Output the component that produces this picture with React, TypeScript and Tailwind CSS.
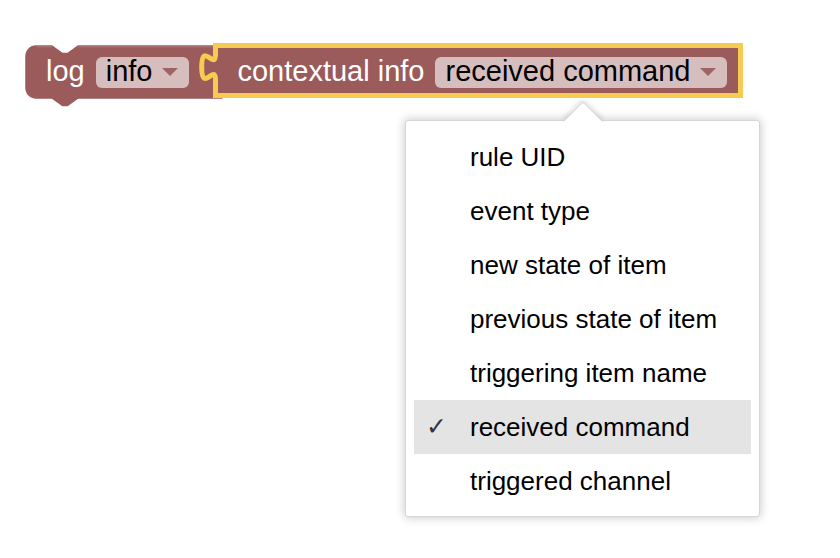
import React from "react";

const BLOCK = "#9b5b5b";

function Field({ label }: { label: string }) {
  return (
    <span className="flex items-center h-[31px] rounded-[6px] bg-[#d7bebe] pl-[10px] pr-[11px] gap-[10px] text-black">
      <span>{label}</span>
      <svg width="16" height="8" viewBox="0 0 16 8">
        <polygon points="0,0 16,0 8,8" fill="#a06262" />
      </svg>
    </span>
  );
}

function BlockShapes() {
  return (
    <svg className="absolute left-0 top-0" width="840" height="558">
      <path
        d="M26 56 A10 10 0 0 1 36 46 H52 L62.4 53.5 H67.6 L78 46 H222 V98 H78 L67.6 105.5 H62.4 L52 98 H36 A10 10 0 0 1 26 88 Z"
        fill={BLOCK}
        stroke={BLOCK}
        strokeWidth="1.5"
        strokeLinejoin="round"
      />
      <path d="M36 46.8 H52 M78 46.8 H213" stroke="#b07a7a" strokeWidth="1" fill="none" />
      <path
        d="M215.5 45.5 H740.5 V95.5 H215.5 V80.1 C215.5 62.8 201.7 93.9 201.7 67.1 C201.7 40.3 215.5 71.5 215.5 54.2 Z"
        fill={BLOCK}
        stroke="#f6cb52"
        strokeWidth="5"
      />
    </svg>
  );
}

export default function App() {
  const items = [
    "rule UID",
    "event type",
    "new state of item",
    "previous state of item",
    "triggering item name",
    "received command",
    "triggered channel",
  ];
  const sel = "received command";
  return (
    <div className="relative w-[840px] h-[558px] bg-white overflow-hidden font-['Liberation_Sans',Arial,sans-serif]">
      <BlockShapes />

      <div className="absolute left-[26px] top-[46px] h-[52px] flex items-center text-[29px] text-white">
        <div className="flex items-center pl-[20px] gap-[11px]">
          <span>log</span>
          <Field label="info" />
        </div>
        <div className="flex items-center ml-[48px] gap-[11px]">
          <span>contextual info</span>
          <Field label="received command" />
        </div>
      </div>

      <div className="absolute left-[405px] top-[120px] w-[355px] h-[397px] bg-white border border-[#d6d6d6] rounded-[3px] shadow-[0_0_10px_1px_rgba(0,0,0,0.2)] pt-[9px] px-[8px] text-[26px] text-black flex flex-col">
        <div className="absolute left-[147px] top-[-21px] w-[60px] h-[22px] overflow-hidden">
          <div className="absolute left-[16px] top-[7px] w-[28px] h-[28px] rotate-45 bg-white border-t border-l border-[#d6d6d6] rounded-tl-[3px] shadow-[-2px_-2px_5px_rgba(0,0,0,0.12)]" />
        </div>
        {items.map((t) => (
          <div
            key={t}
            className={
              t === sel
                ? "h-[54px] flex items-center pl-[12px] gap-[18px] bg-[#e4e4e4]"
                : "h-[54px] flex items-center pl-[56px]"
            }
          >
            {t === sel && (
              <span className="w-[26px] text-[25px] text-[#333] font-['DejaVu_Sans',sans-serif]">✓</span>
            )}
            <span>{t}</span>
          </div>
        ))}
      </div>
    </div>
  );
}
